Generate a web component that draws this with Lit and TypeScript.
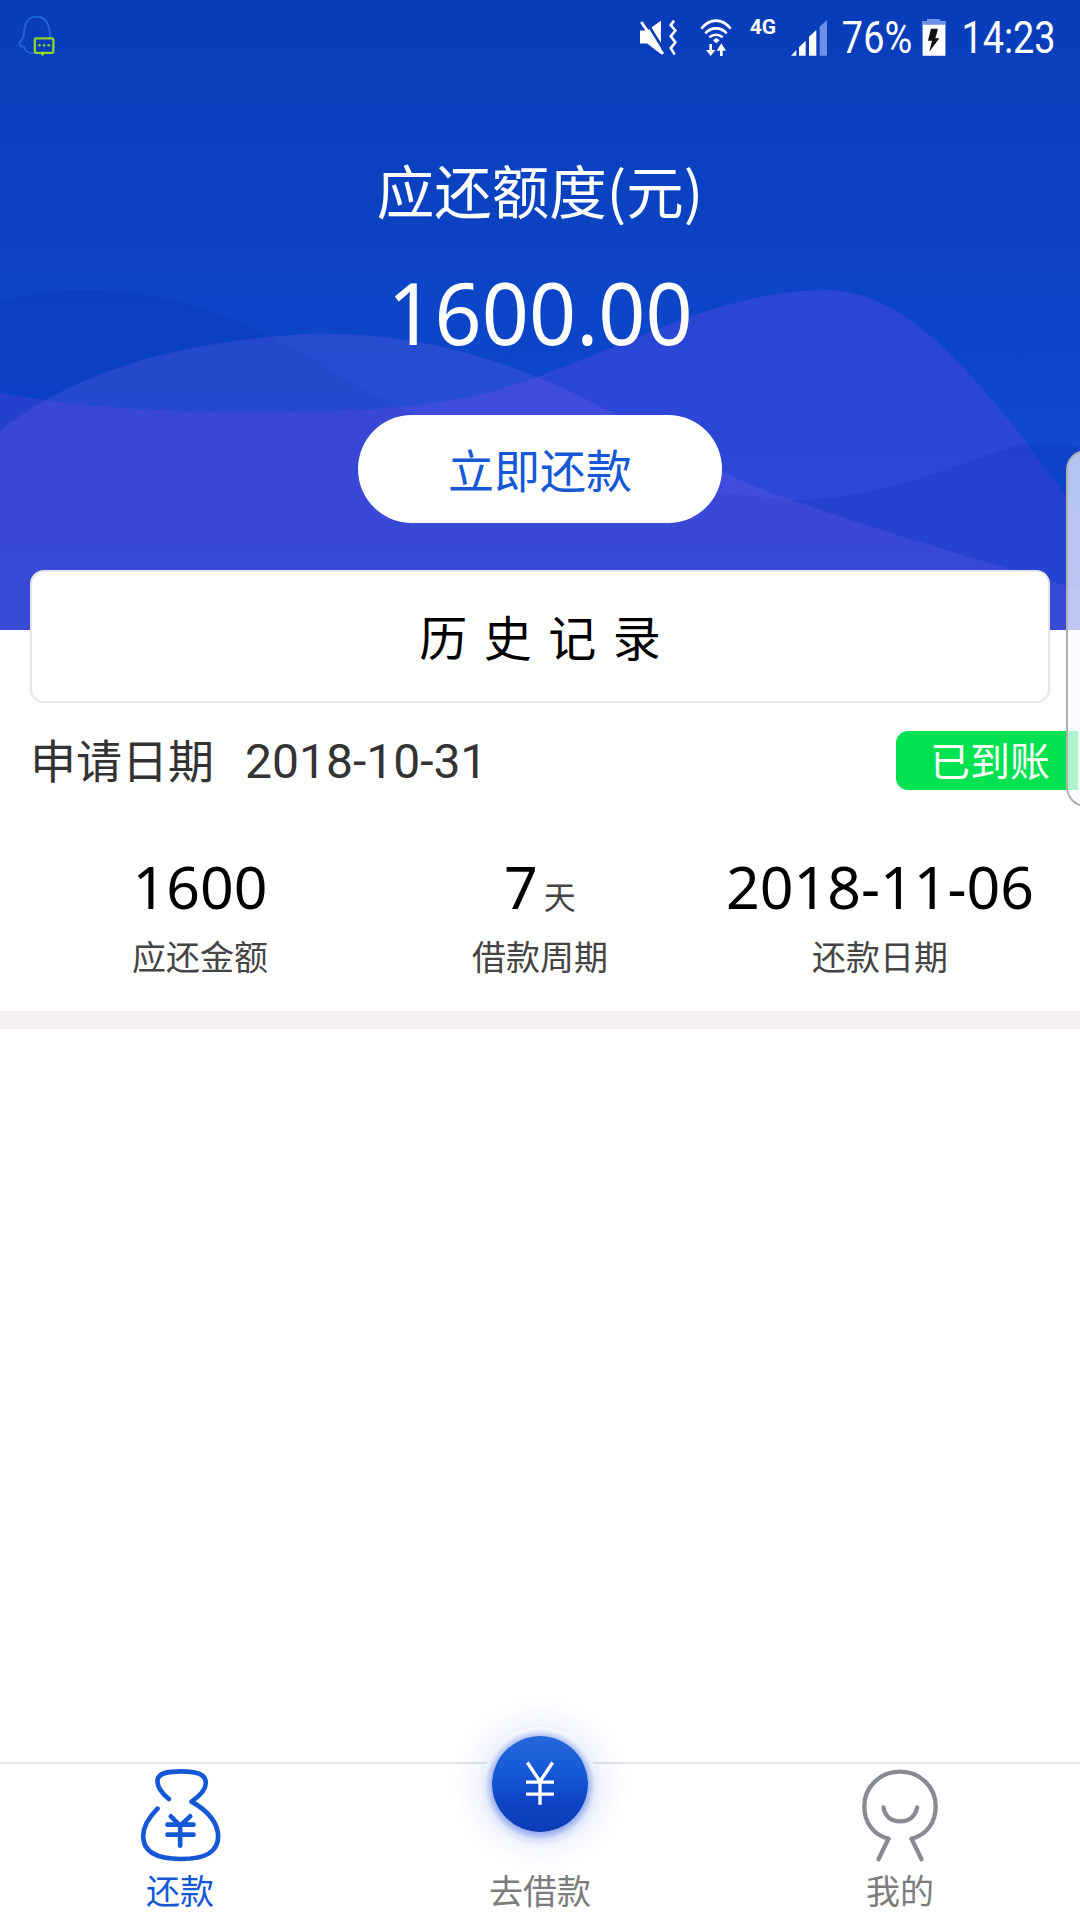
import { LitElement, html, css, svg } from 'lit';
import { customElement } from 'lit/decorators.js';

const stats = [
  { value: '1600', unit: '', label: '应还金额' },
  { value: '7', unit: '天', label: '借款周期' },
  { value: '2018-11-06', unit: '', label: '还款日期' },
];

const waves = svg`
  <path d="M0 393C80 408 170 412 241 412C360 412 450 410 537 377C650 335 730 290 825 290C900 290 960 360 1017 430L1080 515V630H0Z" fill="rgba(65,70,222,.6)"/>
  <path d="M0 303C30 292 60 290 86 290C170 290 250 320 330 370C450 445 620 485 792 500C900 500 1000 443 1033 443C1050 443 1070 445 1080 447V630H0Z" fill="rgba(6,44,170,.2)"/>
  <path d="M0 431C40 400 120 345 306 334C400 332 470 350 537 377C620 410 700 470 792 500C870 528 940 548 1000 566L1080 590V630H0Z" fill="rgba(120,97,235,.24)"/>
`;

@customElement('app-root')
export class AppRoot extends LitElement {
  static override styles = css`
    :host {
      display: flex;
      flex-direction: column;
      position: relative;
      height: 1920px;
      overflow: hidden;
      background: #fff;
      font-family: "Noto Sans CJK SC", "Noto Sans", sans-serif;
    }

    .hero {
      position: relative;
      height: 630px;
      background: linear-gradient(180deg, #083cb9 0%, #0c46c8 55%, #1250dc 100%);
      display: flex;
      flex-direction: column;
      align-items: center;
      color: #fff;
    }

    .hero-bg {
      position: absolute;
      inset: 0;
      width: 100%;
      height: 100%;
    }

    .status-bar {
      position: relative;
      box-sizing: border-box;
      width: 100%;
      height: 75px;
      display: flex;
      align-items: center;
      padding: 0 25px 0 18px;
    }

    .status-bar svg {
      display: block;
      flex: none;
    }

    .spacer {
      flex: 1;
    }

    .wifi {
      margin-left: 23px;
    }

    .net {
      font: 700 21px/1 Roboto, sans-serif;
      margin: -20px 14px 0 18px;
    }

    .status-text {
      font: 400 44px/1 Roboto, sans-serif;
      display: flex;
      justify-content: center;
      white-space: nowrap;
      transform: scaleX(0.86);
    }

    .pct {
      width: 70px;
      margin-left: 14px;
    }

    .battery {
      margin-left: 10px;
    }

    .time {
      width: 93px;
      margin-left: 16px;
    }

    .title {
      position: relative;
      margin-top: 74px;
      font-size: 57.5px;
      line-height: 80px;
    }

    .amount {
      position: relative;
      margin-top: 32px;
      font: 400 82.5px/100px "Noto Sans", sans-serif;
      transform: scaleY(1.05);
    }

    .pay {
      position: relative;
      margin-top: 54px;
      box-sizing: border-box;
      width: 364px;
      height: 108px;
      padding-bottom: 3px;
      border-radius: 54px;
      background: #fff;
      color: #1558d6;
      font-size: 46px;
      display: flex;
      align-items: center;
      justify-content: center;
    }

    .history {
      position: relative;
      box-sizing: border-box;
      margin: -60px 30px 0;
      height: 133px;
      padding-bottom: 3px;
      background: #fff;
      border: 2px solid #e6e6e6;
      border-radius: 14px;
      display: flex;
      align-items: center;
      justify-content: center;
      font-size: 48px;
      letter-spacing: 16.5px;
      text-indent: 16.5px;
      color: #000;
    }

    .date-row {
      margin-top: 28px;
      height: 59px;
      display: flex;
      align-items: center;
      justify-content: space-between;
      padding: 0 2px 0 30px;
      color: #333;
      font-size: 46px;
    }

    .date-label {
      padding-bottom: 6px;
    }

    .date-value {
      font-family: Roboto, sans-serif;
      font-size: 48px;
      margin-left: 31px;
    }

    .arrived {
      box-sizing: border-box;
      width: 182px;
      height: 59px;
      background: #00e24f;
      border-radius: 12px 0 0 12px;
      color: #fff;
      font-size: 40px;
      display: flex;
      align-items: center;
      justify-content: flex-end;
      padding: 0 28px 4px 0;
    }

    .stats {
      margin-top: 58px;
      padding: 0 30px;
      display: grid;
      grid-template-columns: repeat(3, 1fr);
      text-align: center;
    }

    .stat-value {
      height: 76px;
      font: 400 59px/76px "Noto Sans", sans-serif;
      color: #000;
    }

    .stat-unit {
      font-family: "Noto Sans CJK SC", sans-serif;
      font-size: 32px;
      line-height: 1;
      color: #444;
      margin-left: 6px;
    }

    .stat-label {
      margin-top: 12px;
      font-size: 34px;
      line-height: 40px;
      color: #444;
    }

    .divider {
      margin-top: 35px;
      height: 18px;
      background: #f5f1f0;
    }

    .content {
      flex: 1;
    }

    .tabs {
      height: 158px;
      border-top: 2px solid #e5e5e5;
      display: grid;
      grid-template-columns: repeat(3, 360px);
      box-sizing: border-box;
    }

    .tab {
      display: flex;
      flex-direction: column;
      align-items: center;
      font-size: 34px;
      line-height: 40px;
      color: #7c7c7c;
    }

    .tab svg {
      display: block;
      margin-top: 4px;
      height: 95px;
      fill: none;
      stroke-linecap: round;
      stroke-linejoin: round;
    }

    .tab span {
      margin-top: 7px;
    }

    .tab.active {
      color: #1558d6;
    }

    .fab-slot {
      height: 99px;
    }

    .fab {
      position: absolute;
      left: 492px;
      top: 1736px;
      width: 96px;
      height: 96px;
      border-radius: 50%;
      background: linear-gradient(180deg, #2468dc 0%, #1558d6 40%, #0d44c4 70%, #0c3cb8 100%);
      box-shadow: 0 2px 8px 4px rgba(30, 80, 220, 0.5), 0 0 0 9px #fff, 0 0 18px 26px rgba(120, 140, 240, 0.09);
      display: flex;
      align-items: center;
      justify-content: center;
    }

    .handle {
      position: absolute;
      box-sizing: border-box;
      left: 1066px;
      top: 450px;
      width: 20px;
      height: 357px;
      border: 2px solid #b0b0b4;
      border-radius: 24px 0 0 24px;
      background: rgba(250, 251, 255, 0.7);
    }
  `;

  override render() {
    return html`
      <section class="hero">
        <svg class="hero-bg" viewBox="0 0 1080 630" preserveAspectRatio="none">${waves}</svg>
        <div class="status-bar">
          <svg width="38" height="45" viewBox="55 50 115 135" fill="none">
            <path d="M152 118C152 95 148 55 110 55C82 55 74 78 73 108C72 122 60 128 60 136C60 144 66 146 74 146C74 160 84 165 106 165" stroke="#1f62dc" stroke-width="6" stroke-linecap="round"/>
            <rect x="106" y="120" width="56" height="44" rx="4" fill="#0a3cba" stroke="#8fd42c" stroke-width="7"/>
            <path d="M124 166L128 174L138 166" fill="#8fd42c"/>
            <g fill="#8fd42c"><circle cx="120" cy="141" r="4"/><circle cx="134" cy="141" r="4"/><circle cx="148" cy="141" r="4"/></g>
          </svg>
          <span class="spacer"></span>
          <svg width="38" height="36" viewBox="55 58 116 110">
            <path d="M58 90H80L122 60V162L80 130H58Z" fill="#fff"/>
            <path d="M74 58L136 158" stroke="#0a3cba" stroke-width="8"/>
            <path d="M62 64L128 162" stroke="#fff" stroke-width="9"/>
            <path d="M162 60L152 74L166 90L152 108L166 126L152 144L164 164" fill="none" stroke="#fff" stroke-width="8"/>
          </svg>
          <svg class="wifi" width="32" height="38" viewBox="238 55 96 114" fill="none" stroke="#fff">
            <path d="M242 84C268 52 304 52 330 84" stroke-width="8"/>
            <path d="M254 98C272 78 300 78 318 98" stroke-width="8"/>
            <path d="M266 110C278 100 294 100 306 110" stroke-width="8"/>
            <path d="M277 119L287 112L297 119L287 128Z" fill="#fff" stroke="none"/>
            <path d="M270 130V150M302 166V146" stroke-width="8"/>
            <path d="M256 148H284L270 166ZM288 150H316L302 128Z" fill="#fff" stroke="none"/>
          </svg>
          <span class="net">4G</span>
          <svg width="38" height="36" viewBox="512 56 112 108">
            <path d="M514 163L530 146V163Z" fill="#fff"/>
            <path d="M538 138L558 118V163H538Z" fill="#fff"/>
            <path d="M568 106L590 86V163H568Z" fill="#fff"/>
            <path d="M600 76L622 56V163H600Z" fill="#6b90e6"/>
          </svg>
          <span class="status-text pct">76%</span>
          <svg class="battery" width="24" height="37" viewBox="909 55 70 110">
            <path d="M925 55H962V62H978V164H910V62H925Z" fill="#fff"/>
            <path d="M925 55H962V62H978V72H910V62H925Z" fill="#6b90e6"/>
            <path d="M935 84H956L948 112H960L930 152L938 120H926Z" fill="#111"/>
          </svg>
          <span class="status-text time">14:23</span>
        </div>
        <div class="title">应还额度(元)</div>
        <div class="amount">1600.00</div>
        <div class="pay">立即还款</div>
      </section>

      <div class="history">历史记录</div>

      <div class="date-row">
        <div class="date-label">申请日期<span class="date-value">2018-10-31</span></div>
        <div class="arrived">已到账</div>
      </div>

      <div class="stats">
        ${stats.map(
          (s) => html`
            <div>
              <div class="stat-value">${s.value}${s.unit ? html`<span class="stat-unit">${s.unit}</span>` : ''}</div>
              <div class="stat-label">${s.label}</div>
            </div>
          `,
        )}
      </div>
      <div class="divider"></div>
      <div class="content"></div>

      <nav class="tabs">
        <div class="tab active">
          <svg width="82" viewBox="115 85 245 285" stroke="#1558d6" stroke-width="14">
            <path d="M204 178C180 158 168 140 170 122C172 100 200 95 240 95C285 95 315 102 315 130C315 150 295 170 272 186C320 212 352 250 352 290C352 340 310 358 240 358C170 358 127 340 127 290C127 260 145 232 170 207"/>
            <path d="M210 230L238 258L268 230M200 255H278M200 285H278M238 258V318"/>
          </svg>
          <span>还款</span>
        </div>
        <div class="tab">
          <div class="fab-slot"></div>
          <span>去借款</span>
        </div>
        <div class="tab">
          <svg width="76" viewBox="185 85 230 285" stroke="#888b92" stroke-width="13">
            <path d="M265 298C220 285 192 250 192 200C192 140 240 95 300 95C360 95 408 140 408 200C408 250 380 285 335 298"/>
            <path d="M265 298L235 360M335 298L365 360"/>
            <path d="M250 203C255 232 275 245 300 245C325 245 345 232 352 203"/>
          </svg>
          <span>我的</span>
        </div>
      </nav>

      <div class="fab">
        <svg width="30" height="46" viewBox="255 185 90 135" fill="none" stroke="#fff" stroke-width="10">
          <path d="M262 188L300 245L338 188M258 247H342M258 283H342M300 245V315"/>
        </svg>
      </div>
      <div class="handle"></div>
    `;
  }
}
